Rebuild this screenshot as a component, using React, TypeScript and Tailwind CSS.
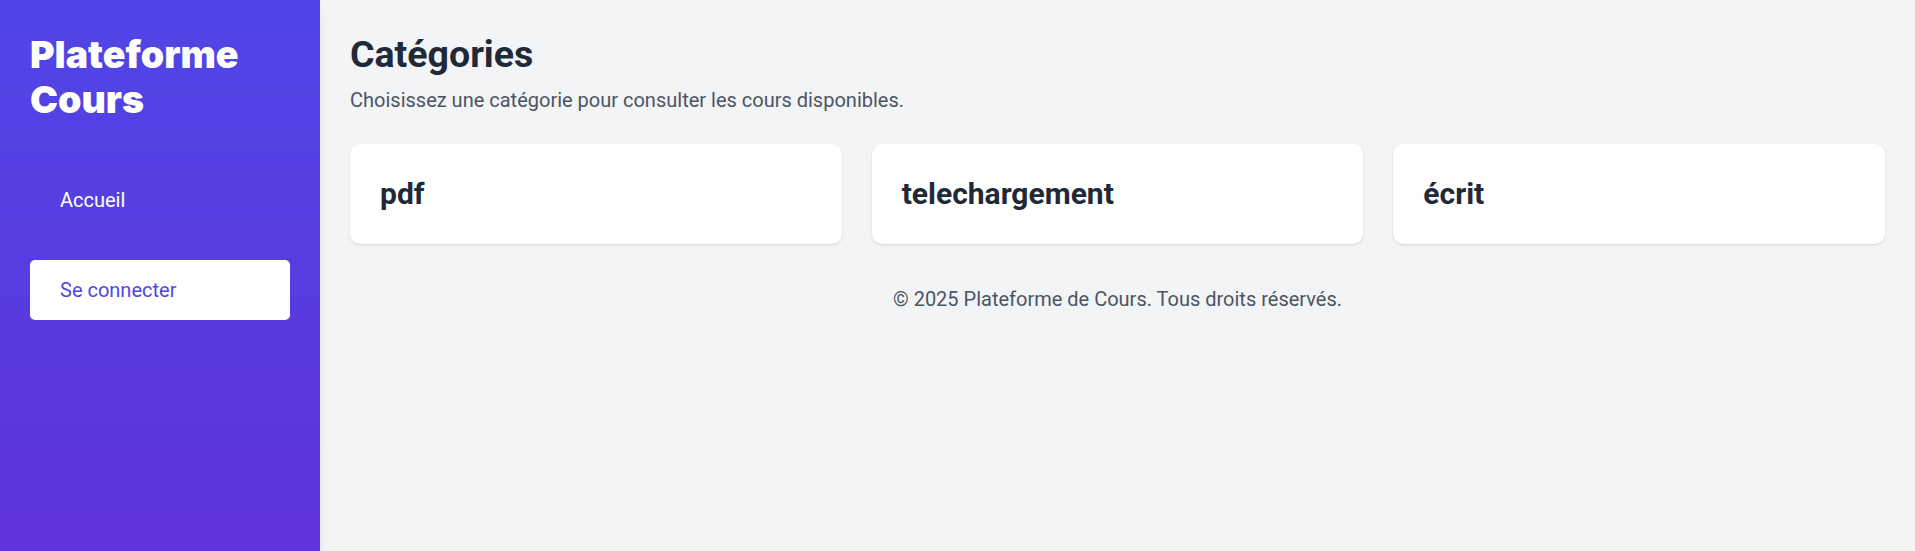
import React from 'react';

const categories = ['pdf', 'telechargement', 'écrit'];

export default function App() {
  return (
    <div className="flex min-h-[551px] bg-[#f3f4f6] font-['Roboto',sans-serif]">
      {/* Sidebar */}
      <aside className="relative z-10 w-[320px] shrink-0 bg-gradient-to-b from-[#4f46e5] to-[#5f32dc] p-[30px] text-white shadow-[0_10px_15px_-3px_rgba(0,0,0,0.1),0_4px_6px_-4px_rgba(0,0,0,0.1)]">
        <h1 className="pt-[2px] font-['Inter',sans-serif] text-[37.5px] font-black leading-[45px]">
          Plateforme Cours
        </h1>
        <nav className="mt-[48px] flex flex-col gap-[30px]">
          <a href="#" className="rounded-[5px] px-[30px] py-[15px] text-[20px] leading-[30px] text-white">
            Accueil
          </a>
          <a href="#" className="rounded-[5px] bg-white px-[30px] py-[15px] text-[20px] leading-[30px] text-[#4f46e5]">
            Se connecter
          </a>
        </nav>
      </aside>

      {/* Main */}
      <main className="flex-1 p-[30px]">
        <h2 className="pt-[2px] text-[37.5px] font-bold leading-[45px] text-[#1f2937]">Catégories</h2>
        <p className="mt-[8px] text-[20px] leading-[30px] text-[#4b5563]">
          Choisissez une catégorie pour consulter les cours disponibles.
        </p>

        <div className="mt-[29px] grid grid-cols-3 gap-[30px]">
          {categories.map((c) => (
            <div key={c} className="rounded-[10px] bg-white p-[30px] shadow-[0_1px_3px_0_rgba(0,0,0,0.1),0_1px_2px_-1px_rgba(0,0,0,0.1)]">
              <h3 className="text-[30px] font-bold leading-[40px] text-[#1f2937]">{c}</h3>
            </div>
          ))}
        </div>

        <footer className="mt-[40px] text-center text-[20px] leading-[30px] text-[#4b5563]">
          © 2025 Plateforme de Cours. Tous droits réservés.
        </footer>
      </main>
    </div>
  );
}
